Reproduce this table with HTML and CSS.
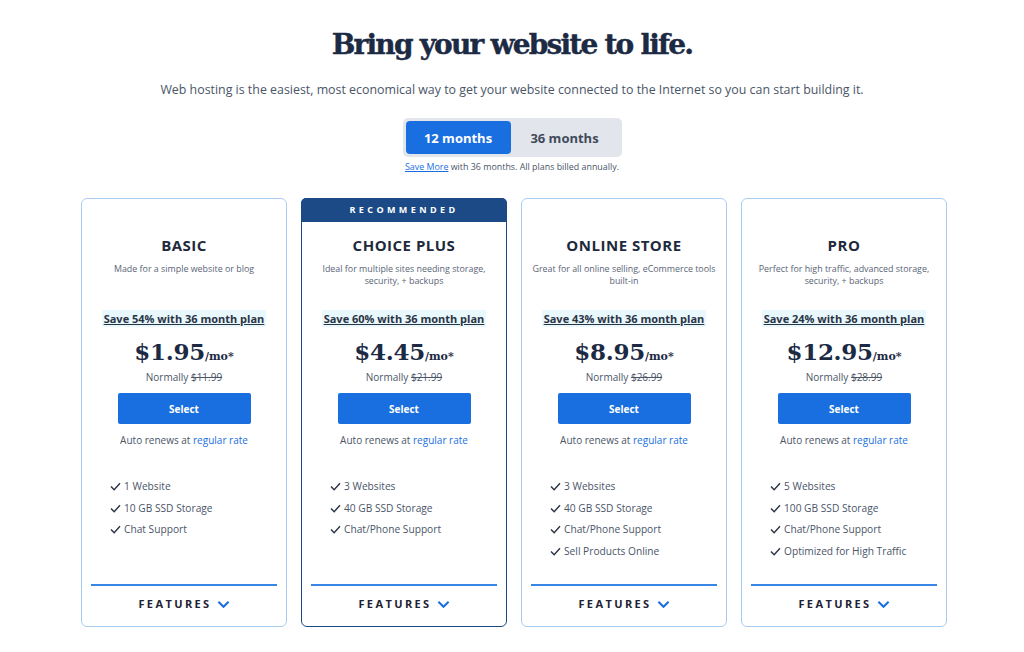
FILE: index.html
```html
<!DOCTYPE html>
<html>
<head>
<meta charset="utf-8">
<link rel="stylesheet" href="styles.css">
</head>
<body>
<div class="page">
  <h1 class="title">Bring your website to life.</h1>
  <p class="subtitle">Web hosting is the easiest, most economical way to get your website connected to the Internet so you can start building it.</p>
  <div class="toggle">
    <span class="opt active">12 months</span>
    <span class="opt">36 months</span>
  </div>
  <p class="note"><a href="#">Save More</a> with 36 months. All plans billed annually.</p>

  <div class="cards">
    <div class="card">
      <h3 class="name">BASIC</h3>
      <p class="desc">Made for a simple website or blog</p>
      <div class="save"><span>Save 54% with 36 month plan</span></div>
      <div class="price">$1.95<span class="mo">/mo*</span></div>
      <div class="normal">Normally <s>$11.99</s></div>
      <button class="select">Select</button>
      <div class="renew">Auto renews at <a href="#">regular rate</a></div>
      <ul class="list">
        <li><svg viewBox="0 0 12 10"><polyline points="1,5 4.5,8.5 11,1.5"/></svg>1 Website</li>
        <li><svg viewBox="0 0 12 10"><polyline points="1,5 4.5,8.5 11,1.5"/></svg>10 GB SSD Storage</li>
        <li><svg viewBox="0 0 12 10"><polyline points="1,5 4.5,8.5 11,1.5"/></svg>Chat Support</li>
      </ul>
      <div class="foot">FEATURES<svg viewBox="0 0 14 9"><polyline points="1.5,1.5 7,7 12.5,1.5"/></svg></div>
    </div>

    <div class="card rec">
      <div class="band">RECOMMENDED</div>
      <h3 class="name">CHOICE PLUS</h3>
      <p class="desc">Ideal for multiple sites needing storage, security, + backups</p>
      <div class="save"><span>Save 60% with 36 month plan</span></div>
      <div class="price">$4.45<span class="mo">/mo*</span></div>
      <div class="normal">Normally <s>$21.99</s></div>
      <button class="select">Select</button>
      <div class="renew">Auto renews at <a href="#">regular rate</a></div>
      <ul class="list">
        <li><svg viewBox="0 0 12 10"><polyline points="1,5 4.5,8.5 11,1.5"/></svg>3 Websites</li>
        <li><svg viewBox="0 0 12 10"><polyline points="1,5 4.5,8.5 11,1.5"/></svg>40 GB SSD Storage</li>
        <li><svg viewBox="0 0 12 10"><polyline points="1,5 4.5,8.5 11,1.5"/></svg>Chat/Phone Support</li>
      </ul>
      <div class="foot">FEATURES<svg viewBox="0 0 14 9"><polyline points="1.5,1.5 7,7 12.5,1.5"/></svg></div>
    </div>

    <div class="card">
      <h3 class="name">ONLINE STORE</h3>
      <p class="desc">Great for all online selling, eCommerce tools built-in</p>
      <div class="save"><span>Save 43% with 36 month plan</span></div>
      <div class="price">$8.95<span class="mo">/mo*</span></div>
      <div class="normal">Normally <s>$26.99</s></div>
      <button class="select">Select</button>
      <div class="renew">Auto renews at <a href="#">regular rate</a></div>
      <ul class="list">
        <li><svg viewBox="0 0 12 10"><polyline points="1,5 4.5,8.5 11,1.5"/></svg>3 Websites</li>
        <li><svg viewBox="0 0 12 10"><polyline points="1,5 4.5,8.5 11,1.5"/></svg>40 GB SSD Storage</li>
        <li><svg viewBox="0 0 12 10"><polyline points="1,5 4.5,8.5 11,1.5"/></svg>Chat/Phone Support</li>
        <li><svg viewBox="0 0 12 10"><polyline points="1,5 4.5,8.5 11,1.5"/></svg>Sell Products Online</li>
      </ul>
      <div class="foot">FEATURES<svg viewBox="0 0 14 9"><polyline points="1.5,1.5 7,7 12.5,1.5"/></svg></div>
    </div>

    <div class="card">
      <h3 class="name">PRO</h3>
      <p class="desc">Perfect for high traffic, advanced storage, security, + backups</p>
      <div class="save"><span>Save 24% with 36 month plan</span></div>
      <div class="price">$12.95<span class="mo">/mo*</span></div>
      <div class="normal">Normally <s>$28.99</s></div>
      <button class="select">Select</button>
      <div class="renew">Auto renews at <a href="#">regular rate</a></div>
      <ul class="list">
        <li><svg viewBox="0 0 12 10"><polyline points="1,5 4.5,8.5 11,1.5"/></svg>5 Websites</li>
        <li><svg viewBox="0 0 12 10"><polyline points="1,5 4.5,8.5 11,1.5"/></svg>100 GB SSD Storage</li>
        <li><svg viewBox="0 0 12 10"><polyline points="1,5 4.5,8.5 11,1.5"/></svg>Chat/Phone Support</li>
        <li><svg viewBox="0 0 12 10"><polyline points="1,5 4.5,8.5 11,1.5"/></svg>Optimized for High Traffic</li>
      </ul>
      <div class="foot">FEATURES<svg viewBox="0 0 14 9"><polyline points="1.5,1.5 7,7 12.5,1.5"/></svg></div>
    </div>
  </div>
</div>
</body>
</html>
```

FILE: styles.css
```css
* { box-sizing: border-box; }
html, body { margin: 0; padding: 0; background: #fff; }
body {
  font-family: "Open Sans", "Liberation Sans", sans-serif;
  color: #4a5568;
}
.page {
  display: flex;
  flex-direction: column;
  align-items: center;
  padding-top: 27px;
}
.title {
  margin: 0;
  font-family: "DejaVu Serif", serif;
  font-weight: 900;
  font-size: 28px;
  line-height: 36px;
  color: #1c2a44;
  letter-spacing: -1.8px;
  -webkit-text-stroke: 0.4px #1c2a44;
}
.subtitle {
  margin: 18px 0 0;
  font-size: 12.4px;
  line-height: 18px;
  color: #4a5568;
}
.toggle {
  margin-top: 19px;
  display: flex;
  width: 219px;
  height: 39px;
  padding: 3px;
  background: #e2e6ec;
  border-radius: 5px;
}
.opt {
  flex: 1;
  display: flex;
  align-items: center;
  justify-content: center;
  font-size: 13px;
  font-weight: 700;
  color: #3f4a5a;
  border-radius: 4px;
}
.opt.active {
  flex: 0 0 105px;
  background: #1a6fe0;
  color: #fff;
}
.note {
  margin: 4px 0 0;
  font-size: 8.9px;
  line-height: 12px;
  color: #4a5568;
}
.note a { color: #1a6fe0; }
.cards {
  margin-top: 25px;
  margin-left: 4px;
  display: flex;
  gap: 14px;
}
.card {
  position: relative;
  width: 206px;
  height: 429px;
  border: 1px solid #a9cdf0;
  border-radius: 6px;
  padding: 37px 9px 0;
  display: flex;
  flex-direction: column;
  align-items: center;
  text-align: center;
}
.card.rec {
  border: 1.5px solid #1b4a86;
}
.band {
  position: absolute;
  top: -1px;
  left: -1px;
  right: -1px;
  height: 24px;
  background: #1b4a86;
  color: #fff;
  font-size: 9px;
  font-weight: 700;
  letter-spacing: 3.4px;
  line-height: 24px;
  border-radius: 5px 5px 0 0;
}
.name {
  margin: 0;
  font-size: 15px;
  line-height: 18px;
  height: 18px;
  font-weight: 700;
  letter-spacing: 0.5px;
  color: #1e2a3c;
}
.desc {
  margin: 9px 0 0;
  font-size: 8.9px;
  line-height: 12px;
  height: 24px;
  color: #5a6577;
  padding: 0;
}
.save {
  margin-top: 24px;
  font-size: 11px;
  line-height: 16px;
  height: 16px;
}
.save span {
  font-weight: 700;
  color: #2b3445;
  background: #e8f8fc;
  text-decoration: underline;
  padding: 1px 2px;
}
.price {
  margin-top: 12px;
  height: 26px;
  font-family: "DejaVu Serif", serif;
  font-weight: bold;
  font-size: 23px;
  line-height: 26px;
  color: #1c2a44;
  letter-spacing: -0.3px;
}
.mo {
  font-size: 11px;
  line-height: 1;
  letter-spacing: 0;
}
.normal {
  margin-top: 5px;
  font-size: 10px;
  line-height: 14px;
  height: 14px;
  color: #4a5568;
}
.normal s { color: #4a5568; }
.select {
  margin-top: 9px;
  width: 133px;
  height: 31px;
  border: none;
  border-radius: 2px;
  background: #1a6fe0;
  color: #fff;
  font-family: inherit;
  font-size: 10px;
  font-weight: 700;
}
.renew {
  margin-top: 9px;
  font-size: 10px;
  line-height: 14px;
  height: 14px;
  color: #4a5568;
}
.renew a { color: #1a6fe0; text-decoration: none; }
.list {
  align-self: stretch;
  list-style: none;
  margin: 29px 0 0;
  padding: 0 0 0 19px;
  text-align: left;
}
.list li {
  display: flex;
  align-items: center;
  gap: 3px;
  font-size: 10.2px;
  line-height: 21.5px;
  height: 21.5px;
  color: #4a5568;
}
.list svg {
  width: 11px;
  height: 9px;
  fill: none;
  stroke: #2b3445;
  stroke-width: 1.6;
}
.foot {
  margin-top: auto;
  align-self: stretch;
  border-top: 2px solid #3a86e6;
  padding: 11px 0 15px;
  display: flex;
  justify-content: center;
  align-items: center;
  gap: 5px;
  font-size: 11px;
  line-height: 14px;
  font-weight: 700;
  letter-spacing: 2.4px;
  color: #1e2233;
}
.foot svg {
  width: 13px;
  height: 9px;
  fill: none;
  stroke: #1a6fe0;
  stroke-width: 2.2;
}
```
